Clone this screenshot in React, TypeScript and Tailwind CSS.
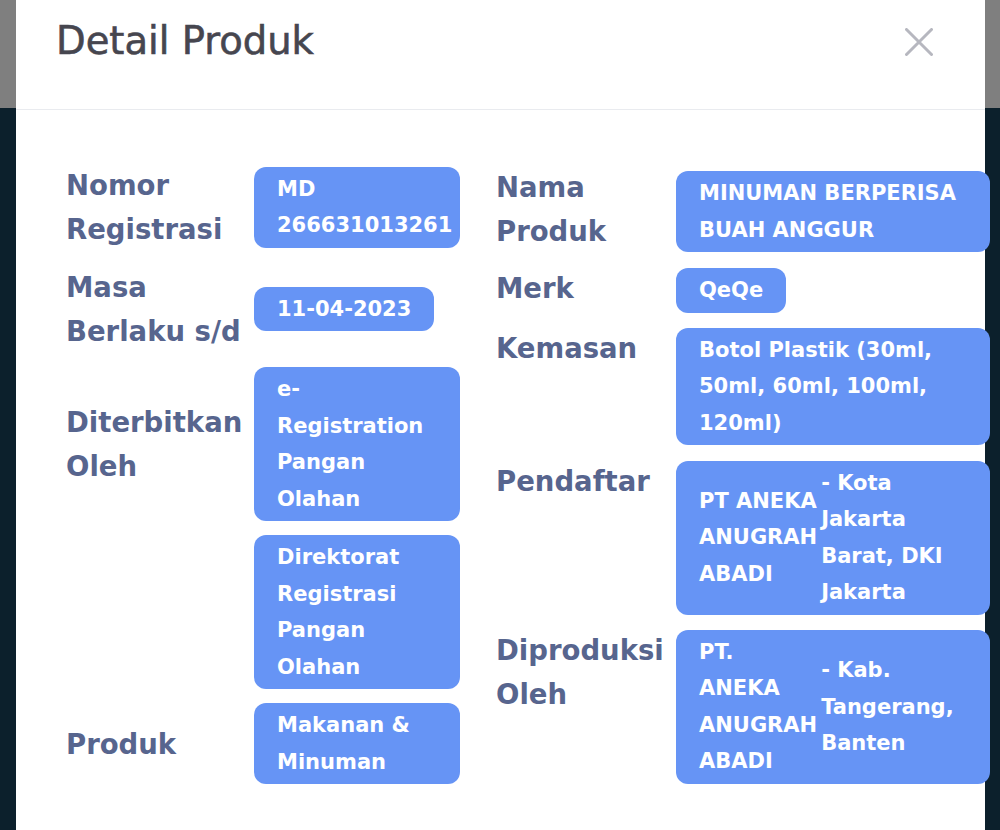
import React from 'react'

type Row = {
  label: string[]
  value: string[] | [string[], string[]]
  fit?: boolean
  split?: boolean
  shift?: string
}

const leftRows: Row[] = [
  { label: ['Nomor', 'Registrasi'], value: ['MD', '266631013261'] },
  { label: ['Masa', 'Berlaku s/d'], value: ['11-04-2023'], fit: true },
  { label: ['Diterbitkan', 'Oleh'], value: ['e-', 'Registration', 'Pangan', 'Olahan'] },
  { label: [], value: ['Direktorat', 'Registrasi', 'Pangan', 'Olahan'] },
  { label: ['Produk'], value: ['Makanan &', 'Minuman'] },
]

const rightRows: Row[] = [
  { label: ['Nama', 'Produk'], value: ['MINUMAN BERPERISA', 'BUAH ANGGUR'], shift: 'mt-[6px]' },
  { label: ['Merk'], value: ['QeQe'], fit: true },
  { label: ['Kemasan'], value: ['Botol Plastik (30ml,', '50ml, 60ml, 100ml,', '120ml)'] },
  {
    label: ['Pendaftar'],
    value: [['PT ANEKA', 'ANUGRAH', 'ABADI'], ['- Kota', 'Jakarta', 'Barat, DKI', 'Jakarta']],
    split: true,
  },
  {
    label: ['Diproduksi', 'Oleh'],
    value: [['PT.', 'ANEKA', 'ANUGRAH', 'ABADI'], ['- Kab.', 'Tangerang,', 'Banten']],
    split: true,
  },
]

function Lines({ lines, className = '' }: { lines: string[]; className?: string }) {
  return (
    <div className={className}>
      {lines.map((l, i) => (
        <div key={i} className="whitespace-nowrap">
          {l}
        </div>
      ))}
    </div>
  )
}

function ValueBox({ row, className = '' }: { row: Row; className?: string }) {
  return (
    <div
      className={`rounded-[12px] bg-[#6694f5] px-[23px] py-[4px] text-[21px] font-bold leading-[36.5px] text-white ${
        row.fit ? 'justify-self-start' : 'w-full'
      } ${className}`}
    >
      {row.split ? (
        <div className="flex items-center">
          <Lines lines={row.value[0] as string[]} className="mr-[4px]" />
          <Lines lines={row.value[1] as string[]} />
        </div>
      ) : (
        <Lines lines={row.value as string[]} />
      )}
    </div>
  )
}

function Label({ lines }: { lines: string[] }) {
  return (
    <div className="text-[27.5px] font-bold leading-[44px] text-[#57658e]">
      {lines.map((l, i) => (
        <div key={i} className="whitespace-nowrap">
          {l}
        </div>
      ))}
    </div>
  )
}

export default function App() {
  return (
    <div className="relative flex h-[830px] w-[1000px] flex-col overflow-hidden font-['DejaVu_Sans',sans-serif]">
      <div className="h-[108px] bg-[#7f7f7f]" />
      <div className="flex-1 bg-[#0c202c]" />

      <div className="absolute inset-y-0 left-[16px] right-[15px] bg-white">
        <div className="flex h-[110px] items-start justify-between border-b border-[#e9ebef] px-[40px]">
          <h1 className="pt-[17px] text-[38.5px] leading-[48px] text-[#46464f] [-webkit-text-stroke:0.6px_#46464f]">
            Detail Produk
          </h1>
          <button className="mr-[12px] mt-[28px]">
            <svg width="28" height="28" viewBox="0 0 28 28" fill="none">
              <path d="M1.5 1.5L26.5 26.5M26.5 1.5L1.5 26.5" stroke="#b6b7bf" strokeWidth="3" strokeLinecap="round" />
            </svg>
          </button>
        </div>

        <div className="flex gap-[36px] pl-[50px] pt-[53px]">
          <div className="grid grid-cols-[188px_206px] items-center gap-y-[14px]">
            {leftRows.map((r, i) => (
              <React.Fragment key={i}>
                <Label lines={r.label} />
                <ValueBox row={r} />
              </React.Fragment>
            ))}
          </div>

          <div className="grid grid-cols-[180px_314px] items-start gap-y-[13px] pt-[2px]">
            {rightRows.map((r, i) => (
              <React.Fragment key={i}>
                <Label lines={r.label} />
                <ValueBox row={r} className={r.shift ?? 'mt-[2px]'} />
              </React.Fragment>
            ))}
          </div>
        </div>
      </div>
    </div>
  )
}
